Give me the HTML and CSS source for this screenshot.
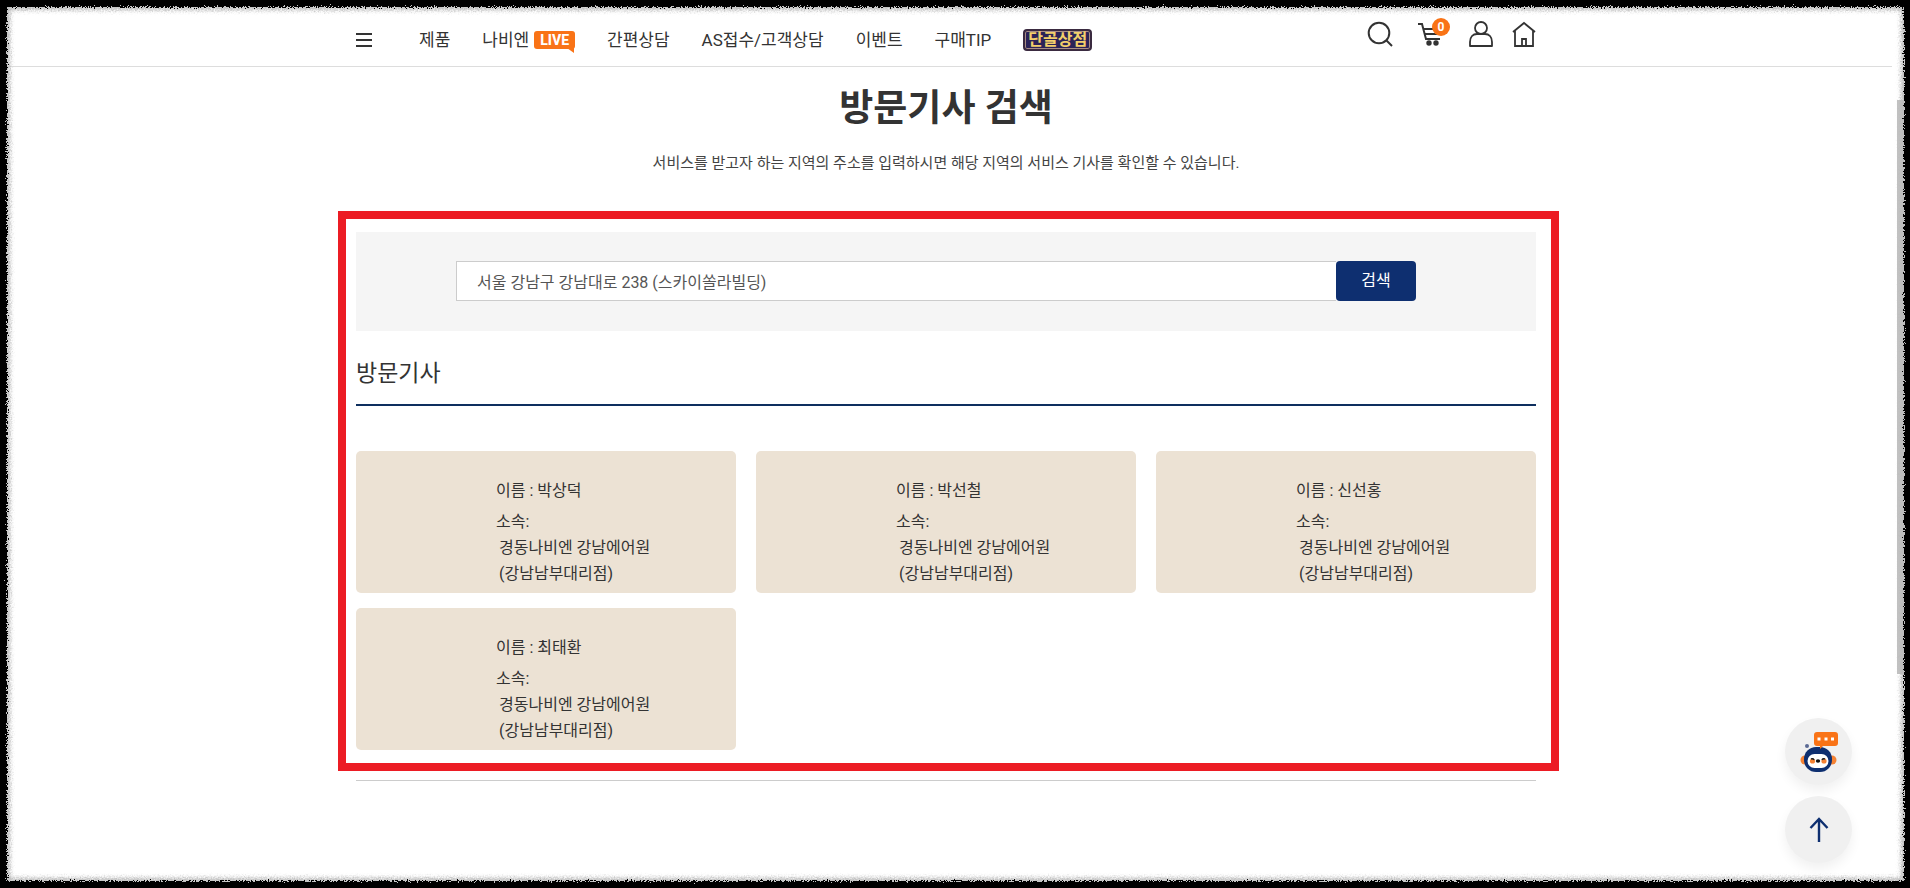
FILE: index.html
```
<!DOCTYPE html>
<html lang="ko">
<head>
    <meta charset="UTF-8">
    <meta name="viewport" content="width=device-width, initial-scale=1.0">
    <title>방문기사 검색</title>
    <link rel="stylesheet" href="styles.css">
</head>
<body>

    <header class="header">
        <div class="container header-inner">
            <button class="menu-btn" type="button" aria-label="전체메뉴">
                <svg width="16" height="16" viewBox="0 0 16 16"><path d="M0 2h16M0 8h16M0 14h16" stroke="#333" stroke-width="2"/></svg>
            </button>

            <nav class="nav">
                <a href="#">제품</a>
                <a href="#" class="nav-live">나비엔
                    <span class="live">LIVE</span>
                </a>
                <a href="#">간편상담</a>
                <a href="#">AS접수/고객상담</a>
                <a href="#">이벤트</a>
                <a href="#">구매TIP</a>
                <a href="#" class="shop-badge">단골상점</a>
            </nav>

            <div class="utils">
                <a href="#" aria-label="검색">
                    <svg width="26" height="26" viewBox="0 0 26 26" fill="none" stroke="#333" stroke-width="2"><circle cx="12" cy="12" r="10.3"/><path d="M19 19l6 6"/></svg>
                </a>
                <a href="#" class="cart" aria-label="장바구니">
                    <svg width="24" height="24" viewBox="0 0 24 24" fill="none" stroke="#333" stroke-width="2"><path d="M0 2h4l4 15h14M5 7h17M7 12h14l2-6"/><circle cx="11" cy="21" r="1.7" fill="#333"/><circle cx="18" cy="21" r="1.7" fill="#333"/></svg>
                    <span class="cart-count">0</span>
                </a>
                <a href="#" aria-label="마이페이지">
                    <svg width="24" height="26" viewBox="0 0 24 26" fill="none" stroke="#333" stroke-width="1.8"><circle cx="12" cy="7" r="6"/><path d="M1 25v-4c0-5 3-8 7-8h8c4 0 7 3 7 8v4z" stroke-linejoin="round"/></svg>
                </a>
                <a href="#" aria-label="홈">
                    <svg width="24" height="26" viewBox="0 0 24 26" fill="none" stroke="#333" stroke-width="1.8"><path d="M1 11L12 2l11 9M3 9.500V25h18V9.500M10 25v-7h4v7"/></svg>
                </a>
            </div>
        </div>
    </header>

    <main class="container">
        <h1>방문기사 검색</h1>
        <p class="desc">서비스를 받고자 하는 지역의 주소를 입력하시면 해당 지역의 서비스 기사를 확인할 수 있습니다.</p>

        <section class="highlight">
            <form class="search">
                <input type="text" aria-label="주소" value="서울 강남구 강남대로 238 (스카이쏠라빌딩)">
                <button type="button">검색</button>
            </form>

            <h2>방문기사</h2>

            <ul class="cards">
                <li class="card">
                    <p class="name">이름 : 박상덕</p>
                    <p>소속:</p>
                    <p class="office">경동나비엔 강남에어원<br>(강남남부대리점)</p>
                </li>
                <li class="card">
                    <p class="name">이름 : 박선철</p>
                    <p>소속:</p>
                    <p class="office">경동나비엔 강남에어원<br>(강남남부대리점)</p>
                </li>
                <li class="card">
                    <p class="name">이름 : 신선홍</p>
                    <p>소속:</p>
                    <p class="office">경동나비엔 강남에어원<br>(강남남부대리점)</p>
                </li>
                <li class="card">
                    <p class="name">이름 : 최태환</p>
                    <p>소속:</p>
                    <p class="office">경동나비엔 강남에어원<br>(강남남부대리점)</p>
                </li>
            </ul>
        </section>

        <hr>
    </main>

    <div class="floating">
        <button type="button" aria-label="챗봇 상담">
            <svg width="38" height="42" viewBox="0 0 38 42">
                <circle cx="5" cy="29" r="4.500" fill="#f58233"/>
                <circle cx="32" cy="29" r="4.500" fill="#f58233"/>
                <circle cx="7" cy="15" r="2" fill="#5b6a94"/>
                <rect x="4" y="16" width="28" height="25" rx="12" fill="#0e2f70"/>
                <rect x="7.500" y="23" width="21" height="14" rx="7" fill="#fff"/>
                <circle cx="12.500" cy="30" r="2.600" fill="#f58233"/>
                <circle cx="24" cy="30" r="2.600" fill="#f58233"/>
                <path d="M11 28q2-1 3 1M22 29q1-2 3-1" fill="none" stroke="#222" stroke-width="1.500"/>
                <ellipse cx="18" cy="30" rx="2.200" ry="1.800" fill="#111"/>
                <path d="M17 1h18q3 0 3 3v8q0 3-3 3H23l-3 3v-3h-3q-3 0-3-3V4q0-3 3-3z" fill="#f97316"/>
                <path d="M17.500 6.500h3v3h-3zM24.500 6.500h3v3h-3zM31 6.500h3v3h-3z" fill="#fff"/>
            </svg>
        </button>
        <button type="button" aria-label="맨 위로">
            <svg width="20" height="26" viewBox="0 0 20 26" fill="none" stroke="#0e2f70" stroke-width="2.400"><path d="M10 25V2M1.500 11L10 2l8.500 9"/></svg>
        </button>
    </div>

    <div class="scroll-thumb"></div>

    <!-- torn paper edge around the page -->
    <svg class="filters" width="0" height="0" aria-hidden="true">
        <filter id="rough" x="0" y="0" width="100%" height="100%">
            <feTurbulence type="fractalNoise" baseFrequency="0.7" numOctaves="2" result="noise"/>
            <feDisplacementMap in="SourceGraphic" in2="noise" scale="7" xChannelSelector="R" yChannelSelector="G"/>
        </filter>
    </svg>
    <div class="page-edge"></div>

</body>
</html>
```
FILE: styles.css
```
* {
    box-sizing: border-box;
}

body {
    margin: 0;
    padding-right: 18px;
    min-height: 100vh;
    background-color: #fff;
    color: #333;
    font-family: Roboto, "Noto Sans CJK KR", sans-serif;
    font-size: 16px;
    line-height: 26px;
    overflow: hidden;
}

h1, h2, p, ul {
    margin: 0;
    padding: 0;
}

a {
    color: inherit;
    text-decoration: none;
}

button, input {
    font: inherit;
}

button {
    border: none;
    cursor: pointer;
}

svg {
    display: block;
}

.container {
    max-width: 1180px;
    margin: 0 auto;
}

.header {
    border-bottom: 1px solid #ddd;
}

.header-inner {
    display: flex;
    align-items: center;
    height: 66px;
    padding-top: 14px;
}

.menu-btn {
    padding: 0;
    margin-right: 47px;
    background: none;
}

.nav {
    display: flex;
    align-items: center;
    gap: 32px;
    font-size: 17px;
}

.nav-live {
    display: flex;
    gap: 5px;
}

.live {
    align-self: center;
    position: relative;
    padding: 0 6px;
    border-radius: 3px;
    background-color: #f97316;
    color: #fff;
    font-size: 14px;
    font-weight: 800;
    line-height: 18px;
}

/* speech bubble tail */
.live::after {
    content: "";
    position: absolute;
    right: 1px;
    bottom: -4px;
    border-top: 5px solid #f97316;
    border-left: 7px solid transparent;
}

.shop-badge {
    padding: 0 3px;
    border: 2px solid #3a2a40;
    border-radius: 4px;
    box-shadow: inset 0 0 0 1px #a88d85;
    background-color: #2b2358;
    color: #f3cf6b;
    font-size: 16px;
    font-weight: 700;
    line-height: 18px;
}

.utils {
    display: flex;
    align-items: center;
    gap: 19px;
    margin-left: auto;
    padding-bottom: 12px;
}

.cart {
    position: relative;
    margin: 0 8px 0 6px;
}

.cart-count {
    position: absolute;
    top: -4px;
    left: 14px;
    width: 18px;
    height: 18px;
    border-radius: 50%;
    background-color: #f97316;
    color: #fff;
    font-size: 12px;
    font-weight: 700;
    line-height: 18px;
    text-align: center;
}

h1 {
    padding-top: 16px;
    font-size: 37px;
    line-height: 52px;
    text-align: center;
}

.desc {
    margin: 15px 0 35px;
    color: #444;
    font-size: 15px;
    text-align: center;
}

.highlight {
    margin: 0 -23px 0 -18px;
    padding: 13px 15px 13px 10px;
    border: 8px solid #ec1c24;
}

.search {
    display: flex;
    padding: 29px 120px 30px 100px;
    background-color: #f5f5f5;
}

.search input {
    flex: 1;
    height: 40px;
    padding: 0 20px;
    border: 1px solid #ccc;
    border-right: none;
    background-color: #fff;
    color: #555;
}

.search button {
    width: 80px;
    border-radius: 4px;
    background-color: #0e2f70;
    color: #fff;
}

h2 {
    padding: 25px 0 12px;
    border-bottom: 2px solid #0e2f5f;
    font-size: 23px;
    font-weight: 400;
    line-height: 36px;
}

.cards {
    display: grid;
    grid-template-columns: repeat(3, 1fr);
    gap: 15px 20px;
    margin-top: 45px;
    list-style: none;
}

.card {
    padding: 27px 20px 6px 140px;
    border-radius: 5px;
    background-color: #ece2d4;
}

.name {
    margin-bottom: 5px;
}

.office {
    padding-left: 3px;
}

hr {
    margin: 9px 0 0;
    border: none;
    border-top: 1px solid #ccc;
}

.floating {
    position: fixed;
    right: 58px;
    bottom: 25px;
    display: flex;
    flex-direction: column;
    gap: 11px;
}

.floating button {
    display: flex;
    align-items: center;
    justify-content: center;
    width: 67px;
    height: 67px;
    padding: 0;
    border-radius: 50%;
    background-color: #f0f0f0;
    box-shadow: 0 6px 12px rgba(0, 0, 0, 0.06);
}

.scroll-thumb {
    position: fixed;
    top: 100px;
    right: 4px;
    width: 9px;
    height: 574px;
    background-color: #c1c1c1;
}

.filters {
    position: absolute;
}

.page-edge {
    position: fixed;
    inset: -10px;
    border: 17px solid #000;
    border-right-width: 16px;
    box-shadow: inset 0 0 4px 3px #bbb;
    filter: url(#rough);
    pointer-events: none;
}
```
